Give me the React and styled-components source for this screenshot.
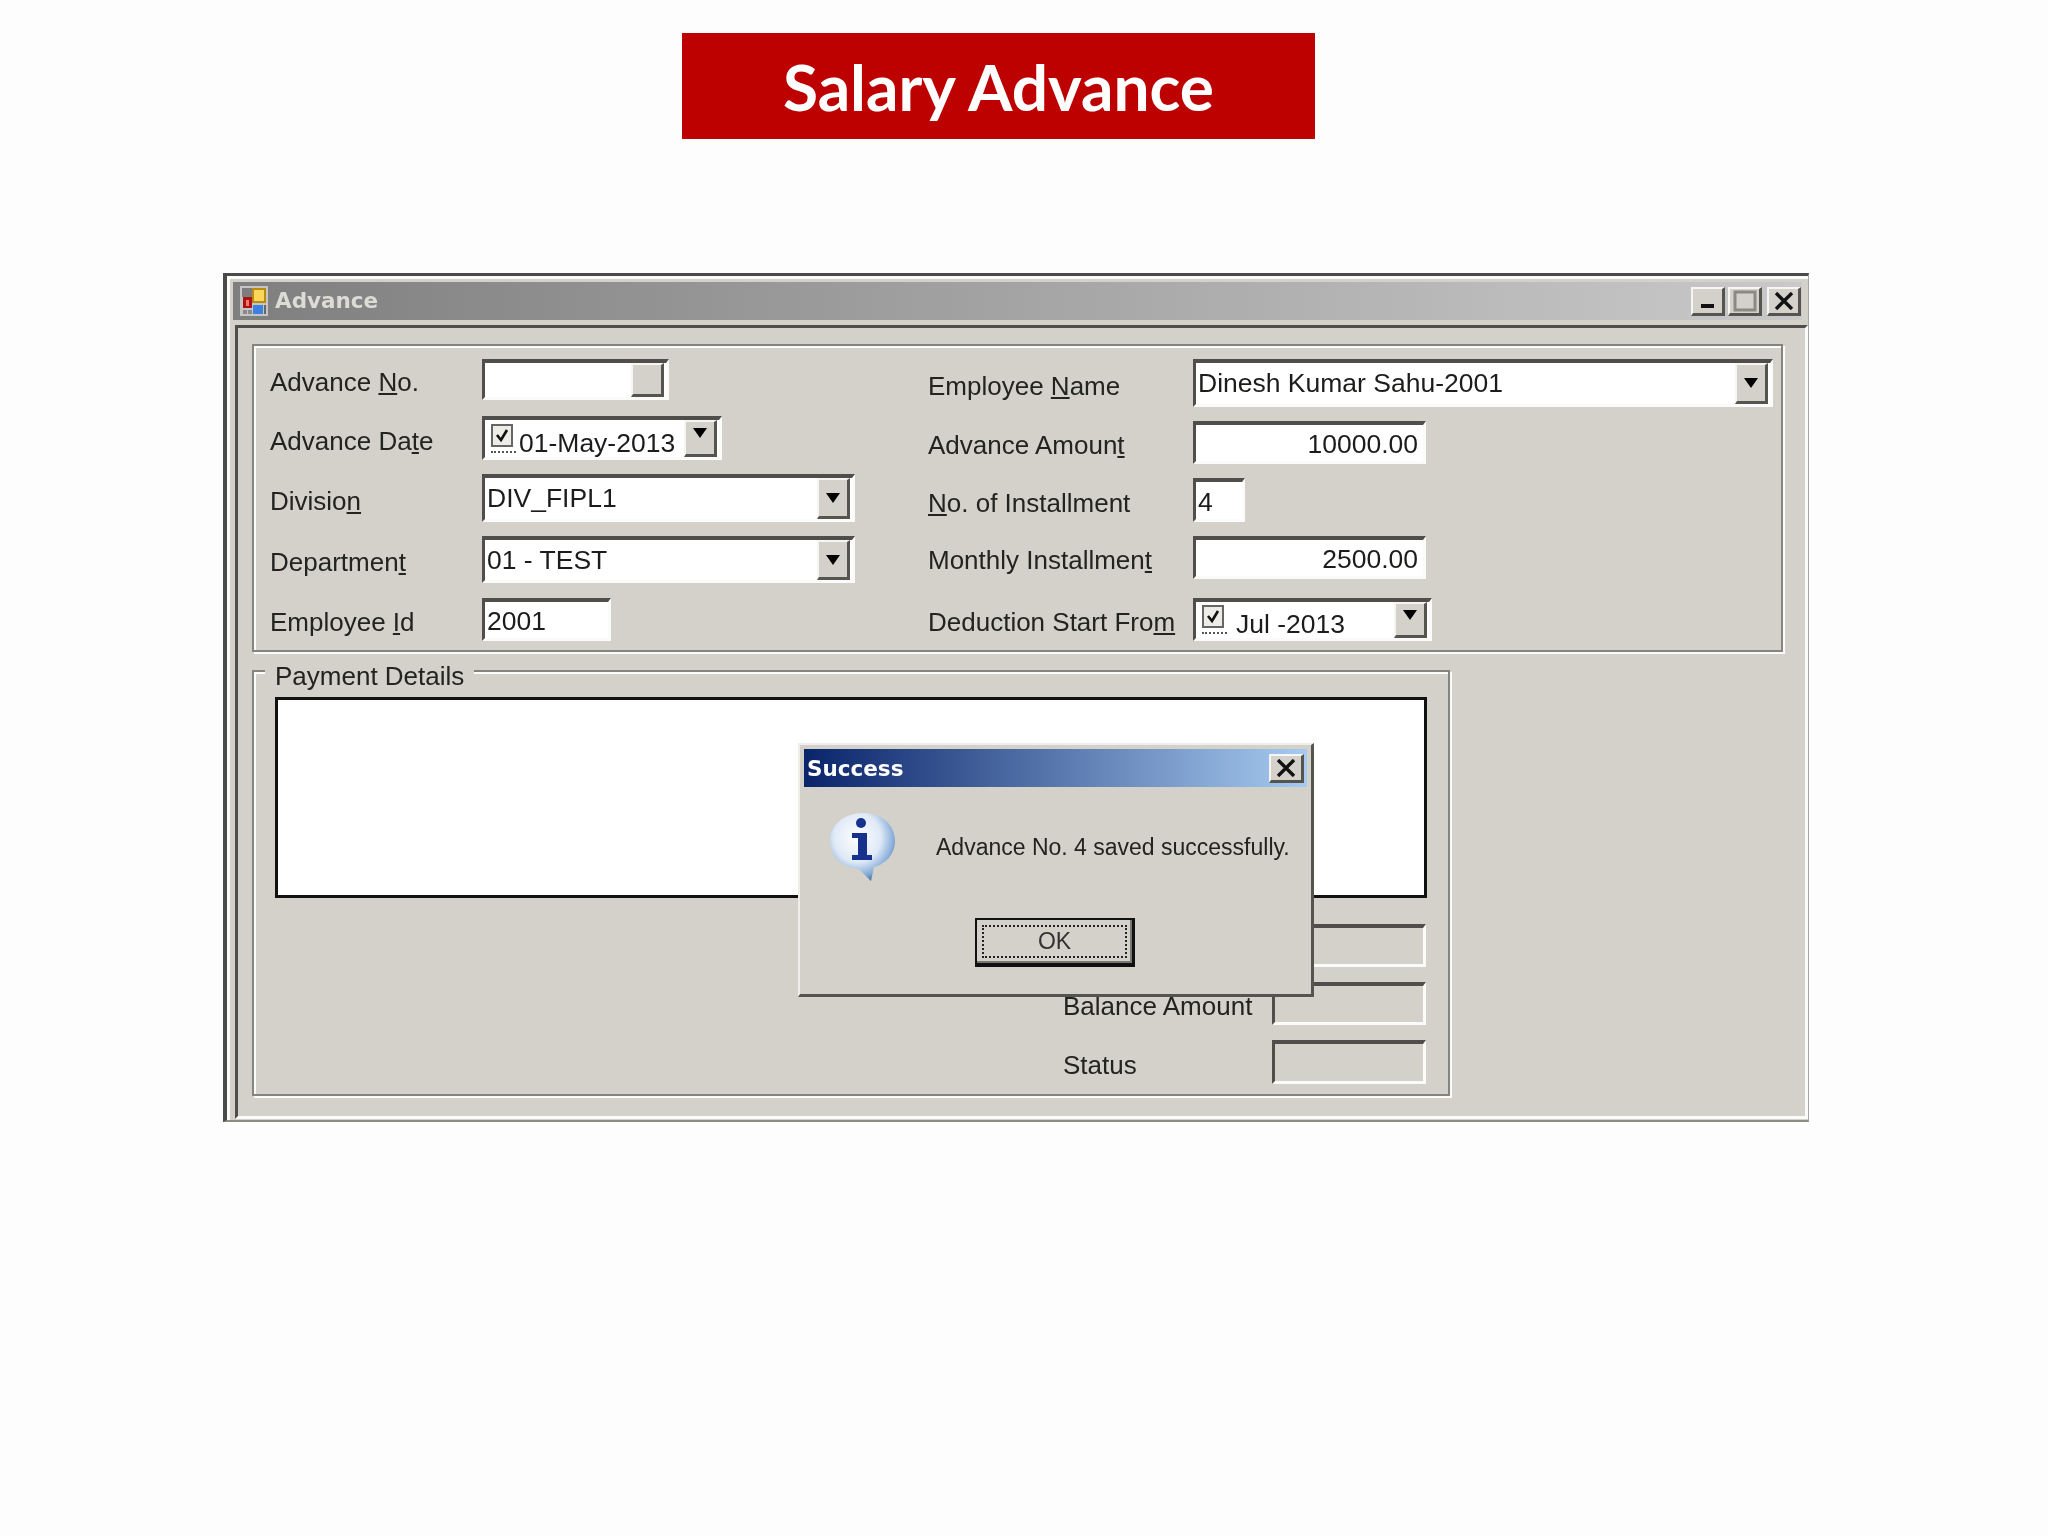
import React from 'react';
import styled, { createGlobalStyle, css } from 'styled-components';

const GlobalStyle = createGlobalStyle`
  html, body {
    margin: 0;
    padding: 0;
    background: #fdfdfd;
  }
  body {
    font-family: "Liberation Sans", Arial, sans-serif;
  }
`;

const FACE = '#d3d1ca';

const raised = css`
  border-style: solid;
  border-width: 2px 3px 3px 2px;
  border-color: #f6f5f2 #55544f #55544f #f6f5f2;
  background: ${FACE};
`;

const sunken = css`
  border-style: solid;
  border-width: 4px 3px 3px 3px;
  border-color: #4f4e4a #fbfbfa #fbfbfa #4f4e4a;
`;

const etched = css`
  border: 2px solid #85847f;
  box-shadow: inset 2px 2px 0 #fbfbfa, 2px 2px 0 #fbfbfa;
`;

const Page = styled.div`
  width: 2048px;
  height: 1536px;
  display: flex;
  flex-direction: column;
  align-items: flex-start;
  overflow: hidden;
`;

const Banner = styled.h1`
  width: 633px;
  height: 106px;
  margin: 33px 0 0 682px;
  display: flex;
  align-items: center;
  justify-content: center;
  background: #bd0000;
  color: #fff;
  font-family: Lato, "Open Sans", sans-serif;
  font-size: 64px;
  font-weight: 700;
  filter: blur(0.5px);
`;

const Window = styled.div`
  position: relative;
  box-sizing: border-box;
  width: 1586px;
  height: 849px;
  margin: 134px 0 0 223px;
  padding: 6px 0 0 6px;
  background: ${FACE};
  border-style: solid;
  border-width: 3px 1px 2px 4px;
  border-color: #4a4a48 #a9a8a3 #8d8c87 #4a4a48;
  box-shadow: inset 3px 3px 0 #fbfbfa;
  filter: blur(0.5px);
`;

const TitleBar = styled.div`
  height: 38px;
  display: flex;
  align-items: center;
  margin-right: 6px;
  padding: 0 1px 0 7px;
  background: linear-gradient(90deg, #7f7f7f, #c9c9c9);
`;

const WindowTitle = styled.span`
  margin-left: 7px;
  padding-bottom: 2px;
  font-family: "DejaVu Sans", sans-serif;
  font-size: 21.5px;
  font-weight: 700;
  color: #dcdbd6;
`;

const TitleButtons = styled.div`
  margin-left: auto;
  display: flex;
  gap: 3px;
`;

const CaptionButton = styled.div`
  ${raised}
  box-sizing: border-box;
  width: ${p => p.$w || 34}px;
  height: 29px;
  margin-left: ${p => p.$gap || 0}px;
  display: flex;
  align-items: center;
  justify-content: center;
`;

const DialogClose = styled(CaptionButton)`
  margin-left: auto;
`;

const Client = styled.div`
  box-sizing: border-box;
  height: 794px;
  margin: 5px 0 0 2px;
  padding: 16px 0 0 14px;
  border-style: solid;
  border-width: 3px 3px 3px 3px;
  border-color: #4f4e4a #fbfbfa #fbfbfa #4f4e4a;
`;

const FormGroup = styled.div`
  ${etched}
  box-sizing: border-box;
  width: 1531px;
  height: 308px;
  display: flex;
  padding: 13px 0 0 16px;
`;

const Column = styled.div`
  width: ${p => p.$w}px;
  flex-shrink: 0;
`;

const Row = styled.div`
  display: flex;
  align-items: center;
  height: ${p => p.$h}px;
  margin-top: ${p => p.$mt || 0}px;
`;

const Label = styled.label`
  width: ${p => p.$w}px;
  flex-shrink: 0;
  padding-top: 6px;
  font-size: 26px;
  color: #23231f;
  white-space: nowrap;
`;

const Field = styled.div`
  ${sunken}
  box-sizing: border-box;
  width: ${p => p.$w}px;
  height: 100%;
  display: flex;
  align-items: center;
  justify-content: ${p => (p.$right ? 'flex-end' : 'flex-start')};
  padding: ${p => (p.$right ? '2px 5px 0 0' : '0 0 0 2px')};
  background: ${p => (p.$disabled ? FACE : '#fff')};
  font-size: 26.5px;
  color: #1c1c1a;
  white-space: nowrap;
`;

const FieldText = styled.span`
  padding-top: ${p => p.$pt || 0}px;
  margin-left: ${p => p.$ml || 0}px;
`;

const DropButton = styled.div`
  ${raised}
  box-sizing: border-box;
  width: 33px;
  height: 100%;
  margin-left: auto;
  margin-right: 2px;
  display: flex;
  align-items: ${p => (p.$top ? 'flex-start' : 'center')};
  justify-content: center;
  padding-top: ${p => (p.$top ? 6 : 0)}px;
`;

const Arrow = styled.i`
  width: 0;
  height: 0;
  border-style: solid;
  border-width: 10px 7px 0;
  border-color: #000 transparent transparent;
`;

const CheckSlot = styled.div`
  width: 25px;
  height: 28px;
  padding-top: 2px;
  margin-left: 4px;
  margin-bottom: 4px;
  flex-shrink: 0;
  border-bottom: 2px dotted #555;
`;

const PaymentGroup = styled.div`
  ${etched}
  position: relative;
  box-sizing: border-box;
  width: 1198px;
  height: 426px;
  margin-top: 18px;
  padding: 25px 21px 0 21px;
`;

const Legend = styled.span`
  position: absolute;
  top: -11px;
  left: 11px;
  padding: 0 10px 0 10px;
  background: ${FACE};
  font-size: 26px;
  color: #23231f;
`;

const ListBox = styled.div`
  box-sizing: border-box;
  width: 1152px;
  height: 201px;
  border: 3px solid #111;
  background: #fff;
`;

const StatusRows = styled.div`
  margin-left: 788px;
`;

const Dialog = styled.div`
  position: absolute;
  left: 571px;
  top: 467px;
  box-sizing: border-box;
  width: 516px;
  height: 254px;
  padding: 4px 4px 0 4px;
  background: ${FACE};
  border-style: solid;
  border-width: 2px 3px 3px 2px;
  border-color: #efeeea #55544f #55544f #efeeea;
`;

const DialogBar = styled.div`
  height: 38px;
  display: flex;
  align-items: center;
  padding: 0 3px 0 3px;
  background: linear-gradient(90deg, #0a246a, #a6caf0);
`;

const DialogTitle = styled.span`
  font-family: "DejaVu Sans", sans-serif;
  font-size: 21.5px;
  font-weight: 700;
  color: #fff;
`;

const DialogBody = styled.div`
  display: flex;
  align-items: center;
  padding: 25px 0 0 24px;
`;

const Message = styled.div`
  margin-left: 38px;
  font-size: 23px;
  color: #23231f;
  white-space: nowrap;
`;

const OkButton = styled.div`
  box-sizing: border-box;
  width: 160px;
  height: 49px;
  margin: 36px 0 0 171px;
  padding: 5px;
  border: 2px solid #111;
  border-right-width: 3px;
  border-bottom-width: 4px;
  background: ${FACE};
  box-shadow: inset -2px -2px 0 #77766f;
`;

const FocusRing = styled.div`
  box-sizing: border-box;
  height: 100%;
  display: flex;
  align-items: center;
  justify-content: center;
  border: 2px dotted #222;
  font-size: 23px;
  color: #333;
`;

const AppIcon = () => (
  <svg width="28" height="30" viewBox="0 0 28 30">
    <rect x="0" y="0" width="28" height="30" fill="#c5c5c5" />
    <rect x="2" y="2" width="10" height="9" fill="#7d7d7d" />
    <rect x="3" y="11" width="9" height="11" fill="#b01010" />
    <rect x="6" y="14" width="3" height="6" fill="#ee7777" />
    <rect x="12" y="2" width="14" height="15" fill="#b88c10" />
    <rect x="14" y="4" width="10" height="11" fill="#fbd65a" />
    <rect x="3" y="24" width="4" height="4" fill="#8a8a8a" />
    <rect x="8" y="24" width="4" height="4" fill="#8a8a8a" />
    <rect x="13" y="19" width="10" height="9" fill="#3d82e0" />
    <rect x="24" y="19" width="2" height="9" fill="#666" />
  </svg>
);

const CheckBox = () => (
  <svg width="22" height="23" viewBox="0 0 22 23">
    <rect x="1" y="1" width="20" height="21" fill="#eeece6" stroke="#666" strokeWidth="2" />
    <path d="M6 11 L10 16 L16 6" fill="none" stroke="#111" strokeWidth="2.6" />
  </svg>
);

const InfoIcon = () => (
  <svg width="70" height="70" viewBox="0 0 70 70">
    <defs>
      <radialGradient id="balloon" cx="0.42" cy="0.36" r="0.66">
        <stop offset="0" stopColor="#ffffff" />
        <stop offset="0.55" stopColor="#dfe9f6" />
        <stop offset="0.85" stopColor="#86acd9" />
        <stop offset="1" stopColor="#44719f" />
      </radialGradient>
    </defs>
    <path
      d="M35 1 C54 1 67 13 67 29 C67 44 55 53 46 55 L43 69 L31 57 C14 56 2 45 2 29 C2 13 16 1 35 1 Z"
      fill="url(#balloon)"
    />
    <circle cx="33" cy="11" r="5" fill="#17328f" />
    <path d="M24 21 H39 V43 H44 V48 H24 V43 H30 V26 H24 Z" fill="#17318e" />
  </svg>
);

const CaptionIcon = ({ kind }) => {
  if (kind === 'min') return <svg width="16" height="16" viewBox="0 0 16 16"><rect x="1" y="11" width="13" height="4" fill="#111" /></svg>;
  if (kind === 'max') return <svg width="24" height="22" viewBox="0 0 24 22"><rect x="2" y="2" width="20" height="18" fill="none" stroke="#8a8983" strokeWidth="3" /></svg>;
  return <svg width="20" height="18" viewBox="0 0 20 18"><path d="M2 1 L18 17 M18 1 L2 17" stroke="#111" strokeWidth="3.4" /></svg>;
};

const Drop = ({ top }) => (
  <DropButton $top={top}>
    <Arrow />
  </DropButton>
);

export default function App() {
  return (
    <Page>
      <GlobalStyle />
      <Banner>Salary Advance</Banner>

      <Window>
        <TitleBar>
          <AppIcon />
          <WindowTitle>Advance</WindowTitle>
          <TitleButtons>
            <CaptionButton><CaptionIcon kind="min" /></CaptionButton>
            <CaptionButton><CaptionIcon kind="max" /></CaptionButton>
            <CaptionButton $gap={2}><CaptionIcon kind="close" /></CaptionButton>
          </TitleButtons>
        </TitleBar>

        <Client>
          <FormGroup>
            <Column $w={658}>
              <Row $h={41}>
                <Label $w={212}>Advance <u>N</u>o.</Label>
                <Field $w={187}>
                  <DropButton />
                </Field>
              </Row>
              <Row $h={44} $mt={16}>
                <Label $w={212}>Advance Da<u>t</u>e</Label>
                <Field $w={240}>
                  <CheckSlot><CheckBox /></CheckSlot>
                  <FieldText $pt={9} $ml={3}>01-May-2013</FieldText>
                  <Drop top />
                </Field>
              </Row>
              <Row $h={48} $mt={14}>
                <Label $w={212}>Divisio<u>n</u></Label>
                <Field $w={373}>
                  DIV_FIPL1
                  <Drop />
                </Field>
              </Row>
              <Row $h={47} $mt={14}>
                <Label $w={212}>Departmen<u>t</u></Label>
                <Field $w={373}>
                  01 - TEST
                  <Drop />
                </Field>
              </Row>
              <Row $h={43} $mt={15}>
                <Label $w={212}>Employee <u>I</u>d</Label>
                <Field $w={129}><FieldText $pt={3}>2001</FieldText></Field>
              </Row>
            </Column>

            <Column $w={845}>
              <Row $h={48}>
                <Label $w={265}>Employee <u>N</u>ame</Label>
                <Field $w={580}>
                  Dinesh Kumar Sahu-2001
                  <Drop />
                </Field>
              </Row>
              <Row $h={43} $mt={14}>
                <Label $w={265}>Advance Amoun<u>t</u></Label>
                <Field $w={233} $right>10000.00</Field>
              </Row>
              <Row $h={44} $mt={14}>
                <Label $w={265}><u>N</u>o. of Installment</Label>
                <Field $w={52}><FieldText $pt={4}>4</FieldText></Field>
              </Row>
              <Row $h={43} $mt={14}>
                <Label $w={265}>Monthly Installmen<u>t</u></Label>
                <Field $w={233} $right>2500.00</Field>
              </Row>
              <Row $h={43} $mt={19}>
                <Label $w={265}>Deduction Start Fro<u>m</u></Label>
                <Field $w={239}>
                  <CheckSlot><CheckBox /></CheckSlot>
                  <FieldText $pt={9} $ml={9}>Jul -2013</FieldText>
                  <Drop top />
                </Field>
              </Row>
            </Column>
          </FormGroup>

          <PaymentGroup>
            <Legend>Payment Details</Legend>
            <ListBox />
            <StatusRows>
              <Row $h={43} $mt={26}>
                <Label $w={209} />
                <Field $w={154} $disabled />
              </Row>
              <Row $h={43} $mt={15}>
                <Label $w={209}>Balance Amount</Label>
                <Field $w={154} $disabled />
              </Row>
              <Row $h={44} $mt={15}>
                <Label $w={209}>Status</Label>
                <Field $w={154} $disabled />
              </Row>
            </StatusRows>
          </PaymentGroup>
        </Client>

        <Dialog>
          <DialogBar>
            <DialogTitle>Success</DialogTitle>
            <DialogClose $w={35}><CaptionIcon kind="close" /></DialogClose>
          </DialogBar>
          <DialogBody>
            <InfoIcon />
            <Message>Advance No. 4 saved successfully.</Message>
          </DialogBody>
          <OkButton>
            <FocusRing>OK</FocusRing>
          </OkButton>
        </Dialog>
      </Window>
    </Page>
  );
}
